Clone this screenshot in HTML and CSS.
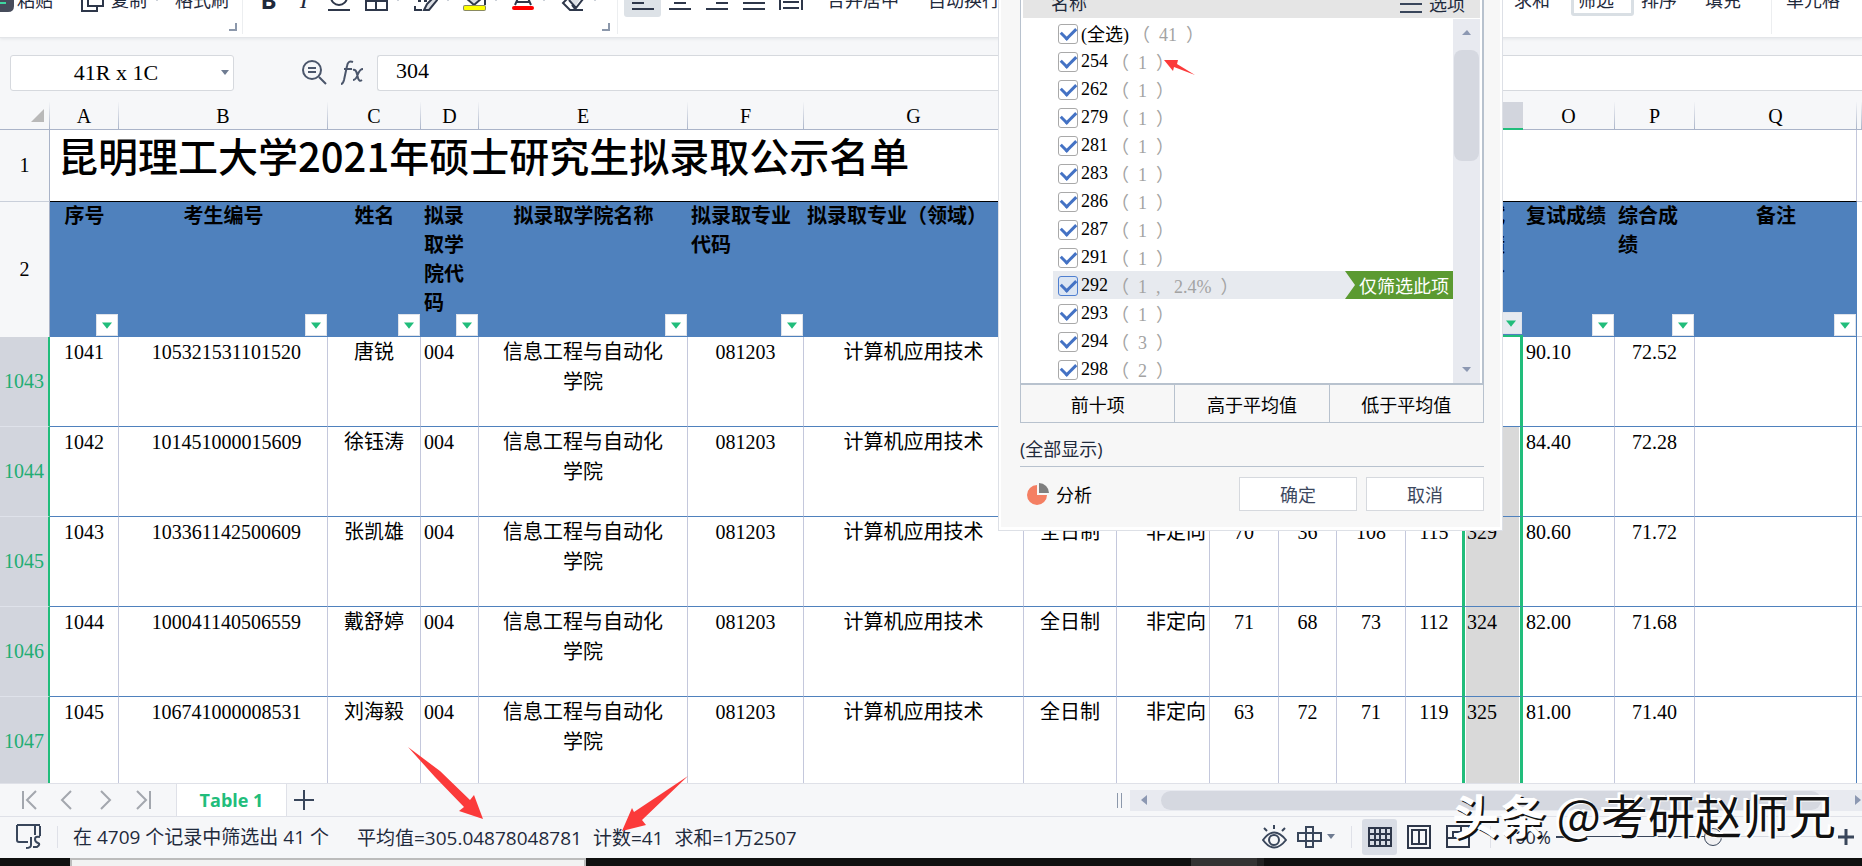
FILE: index.html
```
<!DOCTYPE html>
<html lang="zh-CN">
<head>
<meta charset="utf-8">
<title>昆明理工大学2021年硕士研究生拟录取公示名单</title>
<link rel="stylesheet" href="styles.css">
</head>
<body>
<svg class="defs" aria-hidden="true">
  <defs>
    <symbol id="caret" viewBox="0 0 8 5"><path d="M0 0h8L4 5z"/></symbol>
    <symbol id="corner" viewBox="0 0 8 8"><path d="M7 0v7H0" fill="none" stroke="#8c98ab" stroke-width="2"/></symbol>
  </defs>
</svg>

<header class="ribbon">
  <div class="group clip">
    <button class="tool paste"><svg width="14" height="24" viewBox="0 0 14 24"><path d="M0 0h14v18q0 6-6 6H0z" fill="#474c5b"/><path d="M0 11h7M0 15h6" stroke="#3fd6a0" stroke-width="2"/></svg>粘贴</button>
    <button class="tool copy"><svg width="23" height="23" viewBox="0 0 23 23"><path d="M7 0v17h15V0M4 7H1v15h15v-5" fill="none" stroke="#2e374a" stroke-width="2"/></svg>复制<svg class="caret"><use href="#caret"/></svg></button>
    <button class="tool">格式刷</button>
    <svg class="corner"><use href="#corner"/></svg>
  </div>
  <div class="group font">
    <button class="tool sq b">B</button>
    <button class="tool sq i">I</button>
    <button class="tool sq" aria-label="下划线"><svg width="24" height="24" viewBox="0 0 24 24"><path d="M4 9a8 8 0 0 0 16 0M1 22h22" fill="none" stroke="#2e374a" stroke-width="2"/></svg></button>
    <button class="tool wide" aria-label="边框"><svg width="23" height="23" viewBox="0 0 23 23"><path d="M1 0v21h21V0M1 12h21M11 0v21" fill="none" stroke="#2e374a" stroke-width="2"/></svg><svg class="caret"><use href="#caret"/></svg></button>
    <button class="tool wide" aria-label="绘图边框"><svg width="24" height="23" viewBox="0 0 24 23"><path d="M10 21l3-6 8-8 3 3-9 10z" fill="#dcdfe4"/><path d="M1 0v9M4 12h3M10 12h3M8 21H1v-4M22 6l-9 9-3 6h5l9-11" fill="none" stroke="#2e374a" stroke-width="2"/></svg><svg class="caret"><use href="#caret"/></svg></button>
    <button class="tool wide" aria-label="填充颜色"><svg width="23" height="23" viewBox="0 0 23 23"><path d="M3 8l8 8 8-8z" fill="#d9dde3"/><path d="M3 9l8 7 8-7M22 8v8" fill="none" stroke="#2e374a" stroke-width="2"/><rect y="16" width="23" height="6" rx="2" fill="#8a8a60"/><rect x="1" y="17" width="21" height="4" rx="1" fill="#ff0"/></svg><svg class="caret"><use href="#caret"/></svg></button>
    <button class="tool wide" aria-label="字体颜色"><svg width="22" height="23" viewBox="0 0 22 23"><path d="M3 16L10 0h2l7 16M5 13h12" fill="none" stroke="#2e374a" stroke-width="2"/><rect y="17" width="22" height="4" rx="2" fill="#f00"/></svg><svg class="caret"><use href="#caret"/></svg></button>
    <button class="tool wide" aria-label="清除"><svg width="24" height="23" viewBox="0 0 24 23"><path d="M14 18L8 12 2 6h20z" fill="#dcdfe4"/><path d="M7 9l-5 5 7 7h13M8 11l7 8 7-9M14 20l-3-4" fill="none" stroke="#2e374a" stroke-width="2"/></svg><svg class="caret"><use href="#caret"/></svg></button>
    <svg class="corner"><use href="#corner"/></svg>
  </div>
  <div class="group align">
    <button class="tool al on" aria-label="左对齐"><svg width="22" height="21" viewBox="0 0 22 21"><path d="M0 8h12M0 14h12M0 20h22" stroke="#2e374a" stroke-width="2"/></svg></button>
    <button class="tool al" aria-label="居中"><svg width="22" height="21" viewBox="0 0 22 21"><path d="M5 8h12M5 14h12M0 20h22" stroke="#2e374a" stroke-width="2"/></svg></button>
    <button class="tool al" aria-label="右对齐"><svg width="22" height="21" viewBox="0 0 22 21"><path d="M10 8h12M10 14h12M0 20h22" stroke="#2e374a" stroke-width="2"/></svg></button>
    <button class="tool al" aria-label="两端对齐"><svg width="22" height="21" viewBox="0 0 22 21"><path d="M0 8h22M0 14h22M0 20h22" stroke="#2e374a" stroke-width="2"/></svg></button>
    <button class="tool al" aria-label="分散对齐"><svg width="24" height="21" viewBox="0 0 24 21"><path d="M1 0v21M23 0v21M4 13h16M4 19h16" stroke="#2e374a" stroke-width="2"/></svg></button>
    <button class="tool merge">合并居中</button>
    <button class="tool">自动换行</button>
  </div>
  <div class="group edit">
    <button class="tool">求和</button>
    <button class="tool framed">筛选</button>
    <button class="tool">排序</button>
    <button class="tool fill">填充</button>
  </div>
  <div class="group"><button class="tool cell">单元格</button></div>
</header>

<div class="formula">
  <div class="namebox"><input aria-label="名称框" value="41R x 1C"><svg class="caret"><use href="#caret"/></svg></div>
  <div class="fx">
    <svg width="25" height="25" viewBox="0 0 25 25" fill="none" stroke="#4b566b" stroke-width="2"><circle cx="10" cy="10" r="9"/><path d="M6 8h8M6 12h8M17 17l7 7"/></svg>
    <svg width="24" height="25" viewBox="0 0 24 25" fill="none" stroke="#4b566b" stroke-width="2"><path d="M12 2q-5-2-6 4L3 20q-1 4-3 4M3 9h8M12 10q3-1 4 4l1 4q1 4 4 2M22 9q-3 0-5 5-2 6-5 6"/></svg>
  </div>
  <input class="content" aria-label="编辑栏" value="304">
</div>

<main class="sheet">
  <table>
    <colgroup><col class="c-h"><col class="c-a"><col class="c-b"><col class="c-c"><col class="c-d"><col class="c-e"><col class="c-f"><col class="c-g"><col class="c-c"><col class="c-c"><col class="c-a"><col class="c-d"><col class="c-a"><col class="c-m"><col class="c-n"><col class="c-o"><col class="c-p"><col class="c-q"><col></colgroup>
    <thead>
      <tr class="letters"><th class="all"><svg width="13" height="13" viewBox="0 0 13 13"><path d="M13 0v13H0z" fill="#b9b9b9"/></svg></th><th>A</th><th>B</th><th>C</th><th>D</th><th>E</th><th>F</th><th>G</th><th>H</th><th>I</th><th>J</th><th>K</th><th>L</th><th>M</th><th class="picked">N</th><th>O</th><th>P</th><th>Q</th><th></th></tr>
    </thead>
    <tbody>
      <tr class="title"><th>1</th><td colspan="17">昆明理工大学2021年硕士研究生拟录取公示名单</td><td></td></tr>
      <tr class="heads"><th>2</th>
        <td class="ctr"><div>序号<button aria-label="筛选序号"><svg class="tri"><use href="#caret"/></svg></button></div></td>
        <td class="ctr"><div>考生编号<button aria-label="筛选考生编号"><svg class="tri"><use href="#caret"/></svg></button></div></td>
        <td class="ctr"><div>姓名<button aria-label="筛选姓名"><svg class="tri"><use href="#caret"/></svg></button></div></td>
        <td><div>拟录取学院代码<button aria-label="筛选学院代码"><svg class="tri"><use href="#caret"/></svg></button></div></td>
        <td class="ctr"><div>拟录取学院名称<button aria-label="筛选学院名称"><svg class="tri"><use href="#caret"/></svg></button></div></td>
        <td><div>拟录取专业代码<button aria-label="筛选专业代码"><svg class="tri"><use href="#caret"/></svg></button></div></td>
        <td><div>拟录取专业（领域）</div></td>
        <td></td><td></td><td></td><td></td><td></td><td></td>
        <td class="last-n"><div>初试成绩总分<button class="active" aria-label="筛选初试成绩总分"><svg class="tri"><use href="#caret"/></svg></button></div></td>
        <td><div>复试成绩<button aria-label="筛选复试成绩"><svg class="tri"><use href="#caret"/></svg></button></div></td>
        <td><div>综合成绩<button aria-label="筛选综合成绩"><svg class="tri"><use href="#caret"/></svg></button></div></td>
        <td class="ctr"><div>备注<button aria-label="筛选备注"><svg class="tri"><use href="#caret"/></svg></button></div></td>
        <td class="out"></td></tr>
      <tr class="row"><th>1043</th><td>1041</td><td class="id">105321531101520</td><td>唐锐</td><td class="l">004</td><td class="school">信息工程与自动化学院</td><td>081203</td><td>计算机应用技术</td><td></td><td></td><td></td><td></td><td></td><td class="m"></td><td class="n first"></td><td class="l">90.10</td><td>72.52</td><td class="q"></td><td class="out"></td></tr>
      <tr class="row"><th>1044</th><td>1042</td><td class="id">101451000015609</td><td>徐钰涛</td><td class="l">004</td><td class="school">信息工程与自动化学院</td><td>081203</td><td>计算机应用技术</td><td></td><td></td><td></td><td></td><td></td><td class="m"></td><td class="n"></td><td class="l">84.40</td><td>72.28</td><td class="q"></td><td class="out"></td></tr>
      <tr class="row"><th>1045</th><td>1043</td><td class="id">103361142500609</td><td>张凯雄</td><td class="l">004</td><td class="school">信息工程与自动化学院</td><td>081203</td><td>计算机应用技术</td><td>全日制</td><td class="r">非定向</td><td>70</td><td>36</td><td>108</td><td class="m">115</td><td class="n">329</td><td class="l">80.60</td><td>71.72</td><td class="q"></td><td class="out"></td></tr>
      <tr class="row"><th>1046</th><td>1044</td><td class="id">100041140506559</td><td>戴舒婷</td><td class="l">004</td><td class="school">信息工程与自动化学院</td><td>081203</td><td>计算机应用技术</td><td>全日制</td><td class="r">非定向</td><td>71</td><td>68</td><td>73</td><td class="m">112</td><td class="n">324</td><td class="l">82.00</td><td>71.68</td><td class="q"></td><td class="out"></td></tr>
      <tr class="row"><th>1047</th><td>1045</td><td class="id">106741000008531</td><td>刘海毅</td><td class="l">004</td><td class="school">信息工程与自动化学院</td><td>081203</td><td>计算机应用技术</td><td>全日制</td><td class="r">非定向</td><td>63</td><td>72</td><td>71</td><td class="m">119</td><td class="n">325</td><td class="l">81.00</td><td>71.40</td><td class="q"></td><td class="out"></td></tr>
    </tbody>
  </table>
</main>

<nav class="tabs">
  <div class="steps">
    <button aria-label="第一个"><svg width="15" height="20" viewBox="0 0 15 20"><path d="M1 1v18M14 1l-9 9 9 9"/></svg></button>
    <button aria-label="上一个"><svg width="15" height="20" viewBox="0 0 15 20"><path d="M11 1l-9 9 9 9"/></svg></button>
    <button aria-label="下一个"><svg width="15" height="20" viewBox="0 0 15 20"><path d="M3 1l9 9-9 9"/></svg></button>
    <button aria-label="最后一个"><svg width="15" height="20" viewBox="0 0 15 20"><path d="M14 1v18M1 1l9 9-9 9"/></svg></button>
  </div>
  <button class="tab">Table 1</button>
  <button class="add" aria-label="新建工作表"><svg width="20" height="20" viewBox="0 0 20 20"><path d="M10 0v20M0 10h20" stroke="#39465b" stroke-width="2"/></svg></button>
  <div class="grip"></div>
  <div class="hscroll"><svg width="6" height="10" viewBox="0 0 6 10"><path d="M6 0v10L0 5z"/></svg><div class="thumb"></div><svg width="6" height="10" viewBox="0 0 6 10"><path d="M0 0v10l6-5z"/></svg></div>
</nav>

<footer class="status">
  <svg class="script" width="25" height="25" viewBox="0 0 25 25" fill="none" stroke="#39465b" stroke-width="2"><path d="M24 12V2M19 11V2M1 1h23M1 1v15q0 2 2 2h9M15 13v8q0 3-5 3M24 13q-5-1-5 2t3 4-1 4h-4"/></svg>
  <span class="records">在 4709 个记录中筛选出 41 个</span>
  <span class="stat">平均值=305.04878048781</span>
  <span class="stat">计数=41</span>
  <span class="stat">求和=1万2507</span>
  <div class="views">
    <button class="eye" aria-label="护眼模式"><svg width="25" height="24" viewBox="0 0 25 24" fill="none" stroke="#39465b" stroke-width="2"><path d="M1 15q11-15 23 0-12 15-23 0zM12 0v4M2 3l3 3M23 3l-3 3"/><circle cx="12" cy="15" r="5"/></svg></button>
    <button class="cross" aria-label="阅读模式"><svg width="25" height="22" viewBox="0 0 25 22" fill="none" stroke="#39465b" stroke-width="2"><path d="M9 1h7v20H9zM1 7h23v8H1z"/></svg><svg class="caret"><use href="#caret"/></svg></button>
    <button class="view on" aria-label="普通视图"><svg width="24" height="20" viewBox="0 0 24 20" fill="none" stroke="#2e374a" stroke-width="2"><path d="M1 1h22v18H1zM1 7h22M1 13h22M7 1v18M12 1v18M18 1v18"/></svg></button>
    <button class="view" aria-label="页面布局"><svg width="24" height="24" viewBox="0 0 24 24" fill="none" stroke="#2e374a" stroke-width="2"><path d="M1 1h22v22H1zM5 5h14v14H5zM12 5v14"/></svg></button>
    <button class="view" aria-label="分页预览"><svg width="24" height="24" viewBox="0 0 24 24" fill="none" stroke="#2e374a" stroke-width="2"><path d="M1 1h22v21H1zM1 13h14V1M7 13V7h8"/></svg></button>
    <span class="zoom">100%</span>
    <button class="minus" aria-label="缩小"><svg width="14" height="16" viewBox="0 0 14 16"><path d="M0 8h14" stroke="#39465b" stroke-width="2"/></svg></button>
    <input type="range" aria-label="缩放" min="0" max="200" value="110">
    <button aria-label="放大"><svg width="16" height="16" viewBox="0 0 16 16"><path d="M8 0v16M0 8h16" stroke="#39465b" stroke-width="3"/></svg></button>
  </div>
</footer>
<div class="taskbar"><div class="win"></div><div class="app"></div></div>

<section class="filter" aria-label="筛选">
  <div class="frame">
    <div class="fhead"><span>名称</span><button><svg width="22" height="20" viewBox="0 0 22 20"><path d="M0 11h22M0 19h22" stroke="#39465b" stroke-width="2"/></svg>选项</button></div>
    <div class="fbody">
      <div class="list">
        <label><input type="checkbox" checked>(全选)<span>（  41  ）</span></label>
        <label><input type="checkbox" checked>254<span>（  1  ）</span></label>
        <label><input type="checkbox" checked>262<span>（  1  ）</span></label>
        <label><input type="checkbox" checked>279<span>（  1  ）</span></label>
        <label><input type="checkbox" checked>281<span>（  1  ）</span></label>
        <label><input type="checkbox" checked>283<span>（  1  ）</span></label>
        <label><input type="checkbox" checked>286<span>（  1  ）</span></label>
        <label><input type="checkbox" checked>287<span>（  1  ）</span></label>
        <label><input type="checkbox" checked>291<span>（  1  ）</span></label>
        <div class="hot"><label><input type="checkbox" checked>292<span>（  1  ,   2.4%  ）</span></label><button>仅筛选此项</button></div>
        <label><input type="checkbox" checked>293<span>（  1  ）</span></label>
        <label><input type="checkbox" checked>294<span>（  3  ）</span></label>
        <label><input type="checkbox" checked>298<span>（  2  ）</span></label>
      </div>
      <div class="vscroll"><svg width="9" height="5" viewBox="0 0 9 5"><path d="M0 5h9L5 0z"/></svg><div class="vthumb"></div><svg width="9" height="5" viewBox="0 0 9 5"><path d="M0 0h9L5 5z"/></svg></div>
    </div>
  </div>
  <div class="quick"><button>前十项</button><button>高于平均值</button><button>低于平均值</button></div>
  <p class="shown">(全部显示)</p>
  <div class="actions">
    <button class="analyse"><svg width="22" height="22" viewBox="0 0 22 22"><path d="M10 2a10 10 0 1 0 10 10H10z" fill="#f47f63"/><path d="M12 0v10h10A10 10 0 0 0 12 0z" fill="#7f7f7f"/></svg>分析</button>
    <button class="box">确定</button><button class="box">取消</button>
  </div>
</section>

<svg class="arrow to-count" width="31" height="15" viewBox="0 0 31 15"><path d="M0 0h14l-1 4 18 11-21-8-1 4z"/></svg>
<svg class="arrow to-average" width="75" height="72" viewBox="0 0 75 72"><path d="M0 0l32 24 30 29 4-5 9 24-24-8 5-4-29-30z"/></svg>
<svg class="arrow to-total" width="66" height="55" viewBox="0 0 66 55"><path d="M66 0L12 36l-2-4L0 55l24-6-4-5z"/></svg>
<div class="mark"><b>头条</b> @考研赵师兄</div>
</body>
</html>
```
FILE: styles.css
```
* { box-sizing: border-box; }
body {
  margin: 0;
  height: 100vh;
  display: flex;
  flex-direction: column;
  position: relative;
  overflow: hidden;
  background: #f6f7f9;
  color: #1f2a3c;
  font-family: "Open Sans", "Noto Sans CJK SC", sans-serif;
  font-size: 18px;
}
button { border: 0; padding: 0; background: none; color: inherit; font: inherit; }
input { font: inherit; color: inherit; }
svg { flex: none; }
.defs { position: absolute; width: 0; height: 0; }
.caret { width: 8px; height: 5px; fill: #6f7c92; }

/* Ribbon */
.ribbon {
  flex: none;
  display: flex;
  height: 38px;
  background: #fff;
  border-bottom: 1px solid #e3e5e8;
  box-shadow: 0 1px 3px #e3e5e8;
  overflow: hidden;
}
.group { display: flex; align-items: flex-end; height: 34px; padding-bottom: 22px; border-right: 1px solid #eceef0; }
.group:last-child { border-right: 0; }
.tool { display: flex; align-items: flex-end; height: 24px; line-height: 24px; white-space: nowrap; }
.tool .caret { margin-bottom: 11px; width: 6px; height: 4px; }
.clip { width: 243px; }
.paste { gap: 3px; margin-right: 28px; }
.copy { gap: 7px; margin-right: 15px; }
.corner { width: 8px; height: 8px; margin: 0 0 -19px auto; }
.font { width: 375px; padding-left: 8px; }
.clip .corner, .font .corner { margin-right: 7px; }
.sq { width: 36px; justify-content: center; }
.b { font-weight: 700; font-size: 24px; }
.i { font: italic 24px/24px "Liberation Serif", serif; }
.wide { width: 50px; padding-left: 8px; justify-content: flex-start; gap: 7px; }
.align { width: 890px; padding-left: 6px; border-right: 0; }
.al { width: 37px; justify-content: center; padding-bottom: 2px; }
.al.on { height: 40px; margin-bottom: -5px; padding-bottom: 7px; background: #dde2e7; border-radius: 3px; }
.merge { margin: 0 29px 0 18px; }
.edit { width: 264px; padding-left: 6px; gap: 7px; }
.framed { height: 32px; margin: 0 0 -4px 14px; padding: 0 17px 1px 4px; border: 3px solid #d9dfe4; border-radius: 3px; }
.fill { margin-left: 21px; }
.cell { margin-left: 14px; }

/* Formula bar */
.formula { flex: none; display: flex; align-items: center; height: 64px; padding: 5px 0 0 10px; }
.formula input { border: 0; background: none; outline: 0; font-family: "Liberation Serif", serif; font-size: 22px; color: #000; }
.namebox { display: flex; align-items: center; width: 224px; height: 36px; padding-right: 4px; background: #fff; border: 1px solid #d6d9de; border-radius: 3px; }
.namebox input { flex: 1; min-width: 0; text-align: center; }
.fx { display: flex; gap: 14px; padding: 0 12px 0 68px; }
.formula .content { flex: 1; height: 36px; padding: 0 0 4px 18px; background: #fff; border: 1px solid #d6d9de; border-right: 0; border-radius: 3px 0 0 3px; }

/* Sheet */
.sheet { flex: 1; min-height: 0; overflow: hidden; background: #fff; }
table { width: 100%; table-layout: fixed; border-spacing: 0; font: 20px/29px "Liberation Serif", "Noto Sans CJK SC", serif; color: #000; }
.c-h { width: 50px; }
.c-a { width: 69px; }
.c-b, .c-e { width: 209px; }
.c-c { width: 93px; }
.c-d { width: 58px; }
.c-f { width: 116px; }
.c-g { width: 220px; }
.c-m { width: 56px; }
.c-n { width: 61px; }
.c-o { width: 92px; }
.c-p { width: 80px; }
.c-q { width: 162px; }
th { padding: 0; font-weight: 400; background: #f6f7f9; border-right: 1px solid #a9b3c8; }
td { padding: 0 4px; vertical-align: top; }
.letters th { height: 27px; line-height: 26px; border-style: solid; border-image: linear-gradient(#f6f7f9, #a9b3c8) 1; border-width: 0 1px 1px 0; }
.letters .all { padding-right: 5px; }
.letters .all svg { display: block; margin-left: auto; }
.letters .picked { background: #d2d5dd; border: 0; border-bottom: 2px solid #21bd7b; }
.title > * { height: 72px; border-bottom: 1px solid #000; }
.title th { border-bottom-color: #c9cfda; }
.title td { padding-left: 8px; font: 500 40px/50px "Noto Sans CJK SC", sans-serif; border-right: 1px solid #c4c8dc; }
.title td:last-child { border-right: 0; border-bottom-color: #c4c8dc; }
.heads > * { height: 135px; }
.heads td { background: #4f81bd; font-weight: 700; padding: 0; }
.heads td div { position: relative; height: 135px; padding: 0 3px; overflow: hidden; }
.heads .ctr { text-align: center; }
.heads button { position: absolute; right: 1px; bottom: 1px; width: 22px; height: 22px; background: #fff; border: 1px solid #dfe3ea; display: grid; place-items: center; }
.heads .active { background: #e6eaf0; }
.heads .last-n { border-bottom: 2px solid #21bd7b; }
.heads .last-n div { height: 133px; }
.tri { width: 10px; height: 7px; fill: #21bd7b; }
.row > * { height: 90px; border-bottom: 1px solid #4f81bd; }
.row td { border-right: 1px solid #c4c8dc; text-align: center; line-height: 30px; }
.row th { background: #d2d5dd; color: #21ad73; border-right: 2px solid #21bd7b; border-bottom-color: #dfe2ea; }
.row .id { padding-left: 11px; }
.row .l { text-align: left; padding: 0 3px; }
.row .r { text-align: right; padding-right: 3px; }
.row .school { padding: 0 20px; }
.row .m { border-right: 0; }
.row .n { text-align: left; padding: 0 0 0 2px; background: #d9d9d9; border-left: 3px solid #21bd7b; border-right: 3px solid #21bd7b; box-shadow: inset -1px 0 #fff, inset 1px 0 #fff; }
.row .first { background: #fff; }
.row .q { border-right-color: #4f81bd; }
.row .out, .heads .out { background: #fff; border-right: 0; border-bottom: 1px solid #c4c8dc; }

/* Sheet tabs */
.tabs { flex: none; display: flex; align-items: center; height: 34px; border-top: 1px solid #dfe1e8; border-bottom: 1px solid #dfe1e8; }
.steps { display: flex; width: 176px; padding-left: 22px; gap: 23px; }
.steps button { display: flex; }
.steps path { fill: none; stroke: #a3a7ae; stroke-width: 2; }
.tab { align-self: stretch; width: 111px; background: #fff; border: solid #dfe1e8; border-width: 0 1px; color: #21bd7b; font-weight: 700; line-height: 32px; }
.add { display: flex; padding-left: 7px; }
.grip { width: 5px; height: 15px; margin-left: auto; border: solid #8c98ab; border-width: 0 1px; }
.hscroll { flex: none; display: flex; align-items: center; width: 40%; height: 21px; margin-left: 8px; padding: 0 1px 0 11px; gap: 14px; background: #e8eaf0; fill: #8c98b2; max-width: 732px; }
.thumb { flex: 1; height: 19px; margin-right: 20px; border-radius: 10px; background: #d5d8e0; }

/* Status bar */
.status { flex: none; display: flex; align-items: center; height: 41px; padding: 0 8px 2px 16px; white-space: nowrap; }
.script { margin-right: 16px; }
.records { padding: 0 28px 0 15px; border-left: 1px solid #dfe1e8; line-height: 22px; font-size: 19px; }
.stat { font-size: 19px; margin-right: 11px; }
.views { display: flex; align-items: center; margin-left: auto; }
.views button { display: flex; align-items: center; }
.eye { margin-right: 10px; }
.cross { gap: 5px; padding-right: 16px; margin-right: 10px; border-right: 1px solid #dfe1e8; }
.views .view { width: 35px; height: 36px; justify-content: center; border-radius: 3px; margin-right: 4px; }
.views .on { background: #d9dde5; }
.zoom { margin-left: 11px; padding-left: 14px; width: 66px; border-left: 1px solid #dfe1e8; line-height: 22px; }
.minus { margin-right: 10px; }
input[type=range] { appearance: none; width: 244px; height: 18px; margin: 0 14px 0 0; background: linear-gradient(90deg, #39465b 55%, #d5d8e0 55%) center / 100% 1px no-repeat; }
input[type=range]::-webkit-slider-thumb { appearance: none; width: 18px; height: 18px; border: 1px solid #39465b; border-radius: 50%; background: #f1f1f3; }
.taskbar { flex: none; display: flex; height: 8px; padding-left: 70px; background: #101010; }
.win { width: 516px; background: #f2f2f2; border: solid #bcbcbc; border-width: 2px 2px 0; }
.app { width: 73px; margin-left: 605px; background: #333; border-right: 7px solid #222; }

/* Filter panel */
.filter { position: absolute; left: 998px; top: 0; width: 505px; padding: 0 18px 19px 21px; background: #f7f7f7; border: solid #dde0e6; border-width: 0 1px 1px; box-shadow: inset 2px 0 #fff, inset -2px -3px #fff; }
.frame { padding: 0 2px; background: #fff; border: solid #b8c2ce; border-width: 0 2px 2px 1px; }
.fhead { display: flex; justify-content: space-between; align-items: flex-end; height: 18px; padding: 0 15px 0 28px; background: #e5e5e5; overflow: hidden; }
.fhead span { line-height: 30px; }
.fhead button { display: flex; align-items: flex-end; gap: 7px; line-height: 27px; }
.fhead svg { margin-bottom: 5px; }
.fbody { display: flex; padding-top: 1px; }
.list { flex: 1; padding-left: 30px; font-family: "Liberation Serif", "Noto Sans CJK SC", serif; color: #000; }
.list label { display: flex; align-items: center; height: 28px; padding-left: 5px; white-space: pre; }
.list span { color: #a3a3a3; margin-left: 3px; }
.list input { appearance: none; width: 20px; height: 20px; margin: 2px 3px 0 0; border: 1px solid #a9a9a9; border-radius: 3px; background: #fff; display: grid; place-items: center; }
.list input::before { content: ""; width: 12px; height: 7px; margin-bottom: 4px; border: solid #4472c4; border-width: 0 0 3px 3px; transform: rotate(-45deg); }
.hot { display: flex; justify-content: space-between; height: 28px; background: #e7eaef; }
.list .hot input { background: #dbe5f3; border-color: #4f7fd0; }
.hot button { padding: 0 4px 0 14px; background: #5b9a31; color: #fff; clip-path: polygon(0 0, 100% 0, 100% 100%, 0 100%, 10px 50%); }
.vscroll { width: 27px; display: flex; flex-direction: column; align-items: center; padding: 11px 0; background: #e8eaf0; fill: #8c98b2; }
.vthumb { width: 25px; height: 111px; margin: 15px 0 auto; border-radius: 8px; background: #d5d8e0; }
.quick { display: flex; height: 38px; border: 1px solid #b8c2ce; border-top: 0; color: #000; }
.quick button { flex: 1; }
.quick button + button { border-left: 1px solid #b8c2ce; }
.shown { margin: 0; padding: 14px 0 4px; line-height: 25px; border-bottom: 1px solid #b8c2ce; }
.actions { display: flex; gap: 9px; padding-top: 10px; }
.analyse { display: flex; align-items: center; gap: 7px; margin-right: auto; padding-left: 7px; color: #000; }
.box { width: 118px; height: 34px; background: #fff; border: 1px solid #d6d9de; color: #3c485e; }

/* Annotations */
.arrow { position: absolute; fill: #fb3a3a; }
.to-count { left: 1164px; top: 60px; }
.to-average { left: 408px; top: 747px; }
.to-total { left: 622px; top: 776px; }
.mark { position: absolute; right: 26px; bottom: 24px; font: 47px/56px "Noto Sans CJK SC", sans-serif; color: #111; white-space: nowrap; text-shadow: -2px -2px #fff, -1px -1px #fff, -3px -2px #fff, 1px 1px #fff; }
.mark b { color: #fff; text-shadow: 2px 2px #111; }
```
